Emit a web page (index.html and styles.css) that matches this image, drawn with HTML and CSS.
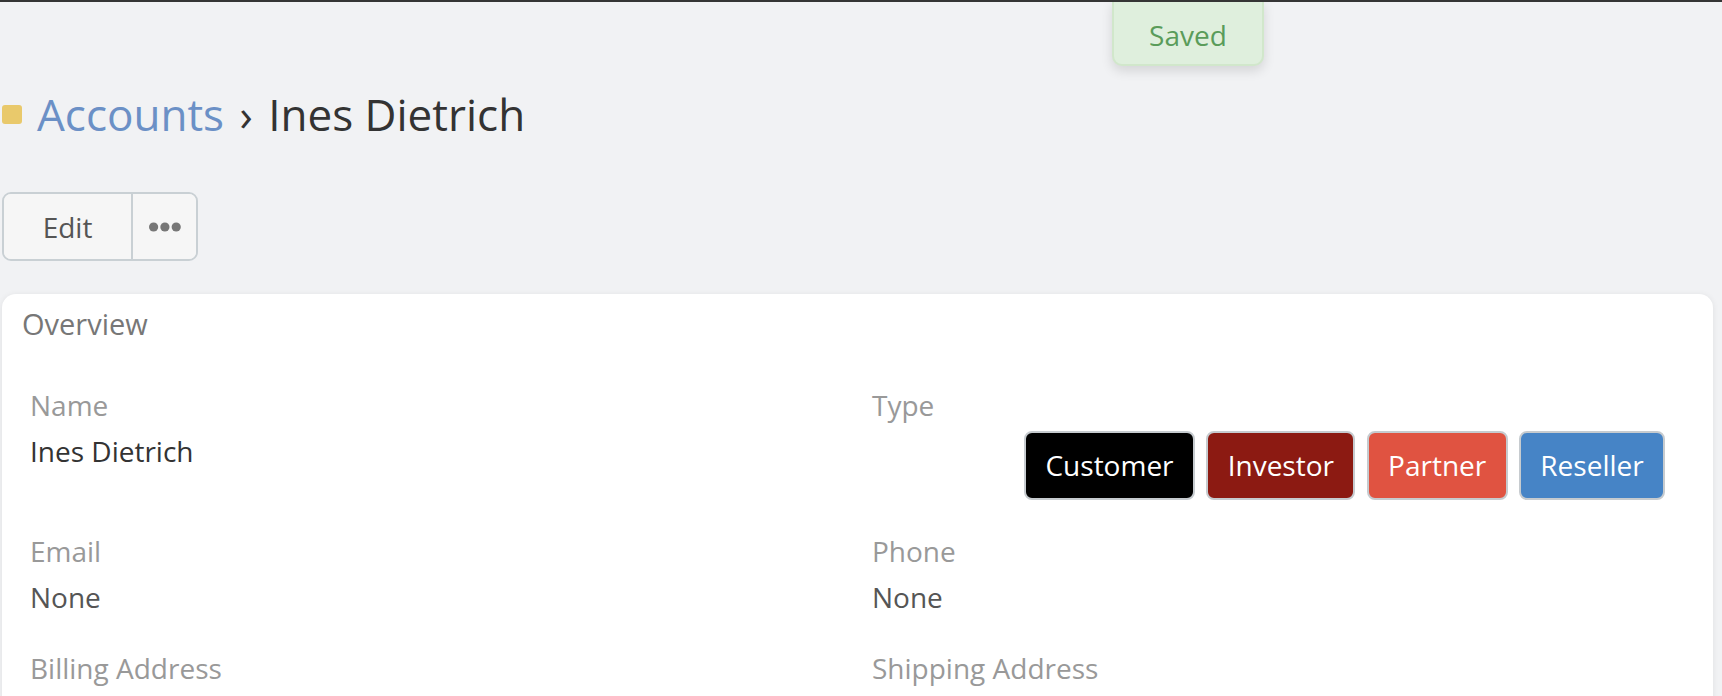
FILE: index.html
```html
<!DOCTYPE html>
<html lang="en">
<head>
<meta charset="utf-8">
<title>Accounts › Ines Dietrich</title>
<link rel="stylesheet" href="styles.css">
</head>
<body>
<div class="topbar"></div>
<div class="toast">Saved</div>
<main class="page">
  <h1 class="header">
    <span class="scope-icon"></span>
    <span class="crumbs"><a class="crumb-link" href="#">Accounts</a> <span class="sep">›</span> Ines Dietrich</span>
  </h1>
  <div class="actions">
    <button class="btn btn-edit" type="button">Edit</button>
    <button class="btn btn-more" type="button" aria-label="More">
      <svg width="32" height="10" viewBox="0 0 32 10"><circle cx="4.6" cy="5" r="4.6"/><circle cx="15.9" cy="5" r="4.6"/><circle cx="27.2" cy="5" r="4.6"/></svg>
    </button>
  </div>
  <section class="panel">
    <div class="panel-heading">Overview</div>
    <div class="fields">
      <div class="field">
        <div class="label">Name</div>
        <div class="value">Ines Dietrich</div>
      </div>
      <div class="field">
        <div class="label">Type</div>
        <div class="tags">
          <span class="tag tag-customer">Customer</span>
          <span class="tag tag-investor">Investor</span>
          <span class="tag tag-partner">Partner</span>
          <span class="tag tag-reseller">Reseller</span>
        </div>
      </div>
      <div class="field">
        <div class="label">Email</div>
        <div class="value none">None</div>
      </div>
      <div class="field">
        <div class="label">Phone</div>
        <div class="value none">None</div>
      </div>
      <div class="field">
        <div class="label">Billing Address</div>
      </div>
      <div class="field">
        <div class="label">Shipping Address</div>
      </div>
    </div>
  </section>
</main>
</body>
</html>
```
FILE: styles.css
```css
html, body {
  margin: 0;
  height: 100%;
  overflow: hidden;
}

body {
  background: #f1f2f4;
  font-family: "Open Sans", "Noto Sans", sans-serif;
  color: #333;
  position: relative;
}

.topbar {
  height: 2px;
  background: #353535;
  position: relative;
  z-index: 2;
}

.toast {
  position: absolute;
  top: 0;
  left: 1112px;
  width: 152px;
  height: 66px;
  box-sizing: border-box;
  padding-top: 15px;
  text-align: center;
  font-size: 28px;
  line-height: 40px;
  color: #5a9c5a;
  background: #dfefdd;
  border: 2px solid #d1e7cb;
  border-top: 0;
  border-radius: 0 0 10px 10px;
  box-shadow: 0 5px 12px rgba(0, 0, 0, 0.12);
  z-index: 1;
}

.page {
  padding: 0 9px 0 2px;
}

.header {
  margin: 82px 0 0;
  height: 60px;
  display: flex;
  align-items: center;
  font-size: 44px;
  font-weight: 400;
  line-height: 60px;
  color: #333;
}

.scope-icon {
  flex: none;
  width: 20px;
  height: 19px;
  border-radius: 3px;
  background: #e9c96b;
  margin-right: 15px;
}

.crumbs {
  white-space: nowrap;
}

.crumb-link {
  color: #6b90c6;
  text-decoration: none;
}

.sep {
  margin: 0 4px 0 4px;
}

.actions {
  margin-top: 48px;
  display: flex;
  width: max-content;
  border: 2px solid #c9d0d4;
  border-radius: 9px;
  overflow: hidden;
  background: #f6f6f6;
}

.btn {
  height: 65px;
  padding: 0;
  border: 0;
  margin: 0;
  background: #f6f6f6;
  font-family: "Open Sans", "Noto Sans", sans-serif;
  font-size: 28px;
  line-height: 40px;
  color: #555;
  display: flex;
  align-items: center;
  justify-content: center;
}

.btn-edit {
  width: 127px;
}

.btn-more {
  width: 65px;
  border-left: 2px solid #c9d0d4;
}

.btn-more svg {
  fill: #777;
}

.panel {
  margin-top: 33px;
  background: #fff;
  border-radius: 14px 14px 0 0;
  box-shadow: 0 1px 6px rgba(0, 0, 0, 0.08);
  padding: 10px 0 60px;
  min-height: 600px;
}

.panel-heading {
  padding: 0 20px;
  font-size: 29px;
  line-height: 40px;
  color: #777;
}

.fields {
  margin-top: 41px;
  padding: 0 28px;
  display: grid;
  grid-template-columns: 842px 1fr;
  row-gap: 31px;
}

.label {
  font-size: 28px;
  line-height: 40px;
  color: #999;
  margin-bottom: 6px;
}

.value {
  font-size: 28px;
  line-height: 40px;
  color: #333;
}

.value.none {
  color: #555;
}

.tags {
  display: flex;
  justify-content: flex-end;
  gap: 11.5px;
  padding-right: 20px;
}

.tag {
  height: 69px;
  box-sizing: border-box;
  padding: 0 19.3px;
  border: 2px solid #c6cbcf;
  border-radius: 8px;
  font-size: 28px;
  line-height: 65px;
  color: #fff;
  white-space: nowrap;
}

.tag-customer { background: #000; }
.tag-investor { background: #8c1a12; }
.tag-partner { background: #e05341; }
.tag-reseller { background: #4684c6; }
```
